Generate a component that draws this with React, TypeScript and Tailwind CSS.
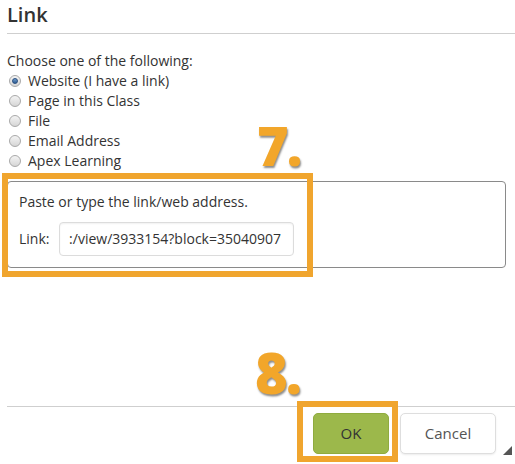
const options = [
  { label: 'Website (I have a link)', checked: true },
  { label: 'Page in this Class' },
  { label: 'File' },
  { label: 'Email Address' },
  { label: 'Apex Learning' },
];

function Radio({ checked }: { checked?: boolean }) {
  return (
    <span className="flex h-[12px] w-[12px] shrink-0 items-center justify-center rounded-full border border-[#a9a9a9] bg-gradient-to-b from-[#f4f4f4] to-[#d6d6d6]">
      {checked && (
        <span className="h-[6px] w-[6px] rounded-full border border-[#2a4f7f] bg-gradient-to-b from-[#6f9ccc] to-[#2f5d93]" />
      )}
    </span>
  );
}

export default function App() {
  return (
    <div className="relative h-[464px] w-[515px] overflow-hidden bg-white font-['Open_Sans',sans-serif] text-[#333]">
      {/* Header */}
      <div className="ml-[7px] h-[34px] border-b border-[#cfcfcf]">
        <h1 className="text-[20px] font-semibold leading-normal">Link</h1>
      </div>

      {/* Body */}
      <div className="px-[7px] pt-[17px] text-[14px] leading-[20px]">
        <p>Choose one of the following:</p>
        <ul>
          {options.map((o) => (
            <li key={o.label} className="flex items-center gap-[7px] pl-[2px]">
              <Radio checked={o.checked} />
              <span>{o.label}</span>
            </li>
          ))}
        </ul>

        {/* Link box */}
        <div className="mt-[10px] h-[87px] w-[499px] rounded-[4px] border border-[#8a8a8a] px-[11px] pt-[10px]">
          <p>Paste or type the link/web address.</p>
          <div className="mt-[10px] flex items-center">
            <span className="w-[40px]">Link:</span>
            <div className="flex h-[34px] w-[235px] items-center justify-end rounded-[4px] border border-[#dcdcdc] px-[12px] shadow-[inset_0_1px_2px_rgba(0,0,0,0.06)]">
              <span className="whitespace-nowrap">:/view/3933154?block=35040907</span>
            </div>
          </div>
        </div>
      </div>

      {/* Footer */}
      <div className="ml-[7px] mt-[138px] border-t border-[#cfcfcf]">
        <div className="flex justify-end gap-[11px] pr-[19px] pt-[6px]">
          <button className="h-[41px] w-[76px] rounded-[5px] border border-[#8fab3f] bg-[#9cb84b] text-[15px] text-[#333]">
            OK
          </button>
          <button className="h-[41px] w-[96px] rounded-[5px] border border-[#dedede] bg-white text-[15px] text-[#555] shadow-[0_1px_2px_rgba(0,0,0,0.08)]">
            Cancel
          </button>
        </div>
      </div>

      {/* Resize grip */}
      <div className="absolute left-[503px] top-[446px] h-0 w-0 border-b-[9px] border-l-[9px] border-b-[#555] border-l-transparent" />

      {/* Annotations */}
      <div className="pointer-events-none absolute left-[2px] top-[173px] h-[104px] w-[311px] border-[6px] border-[#f0a52e]" />
      <div className="pointer-events-none absolute left-[297px] top-[401px] h-[61px] w-[101px] border-[6px] border-[#f0a52e]" />
      <span className="absolute left-[257px] top-[118px] text-[54px] font-extrabold leading-none tracking-[-2px] text-[#f2a62a] [text-shadow:1px_2px_2px_rgba(0,0,0,0.45)]">
        7.
      </span>
      <span className="absolute left-[255px] top-[344px] text-[56px] font-extrabold leading-none tracking-[-2px] text-[#f2a62a] [text-shadow:1px_2px_2px_rgba(0,0,0,0.45)]">
        8.
      </span>
    </div>
  );
}
